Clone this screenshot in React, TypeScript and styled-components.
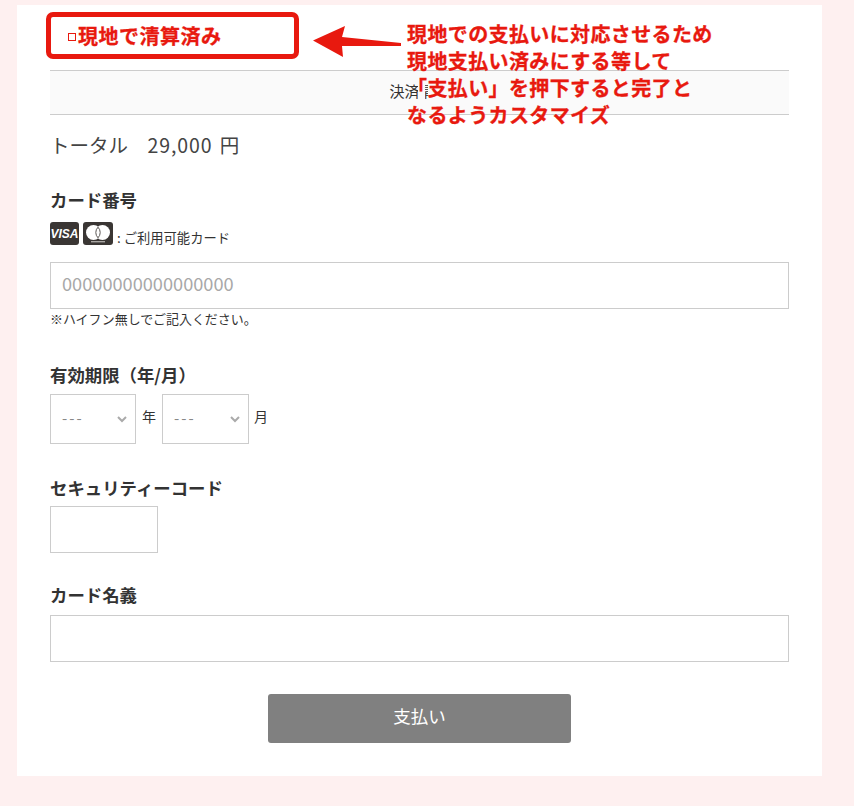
import { createGlobalStyle } from "styled-components"
import styled from "styled-components"

const GlobalStyle = createGlobalStyle`
  html, body {
    margin: 0;
    padding: 0;
    background: #fef0f0;
    font-family: "Noto Sans CJK JP", "Open Sans", sans-serif;
    color: #333;
  }
`

const Page = styled.div`
  width: 854px;
  height: 806px;
  padding: 5px 0 0 17px;
  box-sizing: border-box;
  overflow: hidden;
`

const Card = styled.main`
  position: relative;
  width: 805px;
  height: 771px;
  box-sizing: border-box;
  padding: 65px 33px 0;
  background: #fff;
`

const StepBar = styled.div`
  height: 45px;
  box-sizing: border-box;
  padding-bottom: 4px;
  border-top: 1px solid #ccc;
  border-bottom: 1px solid #ccc;
  background: #fafafa;
  display: flex;
  align-items: center;
  justify-content: center;
  font-size: 15px;
  line-height: 20px;
`

const Total = styled.div`
  margin-top: 15px;
  height: 30px;
  font-size: 19.5px;
  line-height: 30px;
  color: #444;
`

const Amount = styled.span`
  letter-spacing: 0.9px;
  word-spacing: 2px;
`

const Section = styled.section<{ $top: number }>`
  margin-top: ${p => p.$top}px;
`

const Label = styled.div`
  font-size: 17.4px;
  font-weight: 700;
  line-height: 26px;
  color: #333;
`

const CardRow = styled.div`
  display: flex;
  align-items: flex-end;
  gap: 4px;
  margin-top: 8px;
  height: 24px;
  font-size: 13.3px;
  line-height: 17px;
`

const CardNote = styled.span`
  margin-bottom: -1px;
`

const TextInput = styled.input<{ $width?: number; $top: number }>`
  display: block;
  width: ${p => (p.$width ? `${p.$width}px` : "100%")};
  height: 47px;
  margin-top: ${p => p.$top}px;
  box-sizing: border-box;
  padding: 0 11px 6px;
  border: 1px solid #ccc;
  border-radius: 0;
  outline: none;
  background: #fff;
  font-family: inherit;
  font-size: 18.2px;
  color: #333;
  &::placeholder {
    color: #a8a8a8;
    opacity: 1;
  }
`

const Hint = styled.div`
  margin-top: 0;
  font-size: 12.95px;
  line-height: 20px;
  color: #333;
`

const ExpiryRow = styled.div`
  display: flex;
  align-items: center;
  margin-top: 6px;
`

const SelectWrap = styled.div<{ $width: number }>`
  position: relative;
  width: ${p => p.$width}px;
  height: 50px;
`

const Select = styled.select`
  appearance: none;
  width: 100%;
  height: 100%;
  box-sizing: border-box;
  padding: 0 0 4px 11px;
  border: 1px solid #ccc;
  border-radius: 0;
  background: #fff;
  font-family: inherit;
  font-size: 15px;
  letter-spacing: 2px;
  color: #888;
`

const Chevron = styled.svg`
  position: absolute;
  right: 9px;
  top: 21px;
  width: 10px;
  height: 8px;
  pointer-events: none;
`

const Unit = styled.span<{ $width: number }>`
  width: ${p => p.$width}px;
  text-align: center;
  font-size: 14px;
  line-height: 20px;
  margin-top: -7px;
`

const PayRow = styled.div`
  display: flex;
  justify-content: center;
  margin-top: 32px;
`

const PayButton = styled.button`
  width: 303px;
  height: 49px;
  padding: 0 0 6px;
  border: none;
  border-radius: 3px;
  background: #808080;
  color: #fff;
  font-family: inherit;
  font-size: 17.5px;
`

const CalloutBox = styled.div`
  position: absolute;
  left: 29px;
  top: 7px;
  width: 253px;
  height: 47px;
  box-sizing: border-box;
  border: 5px solid #e8190f;
  border-radius: 7px;
  background: #fff;
  display: flex;
  align-items: center;
  padding-left: 17px;
  color: #e8190f;
  font-size: 20px;
  font-weight: 700;
  line-height: 28px;
  letter-spacing: 0.5px;
  -webkit-text-stroke: 0.3px #e8190f;
`

const CalloutCheck = styled.span`
  width: 6px;
  height: 6px;
  margin: 3px 2px 0 0;
  border: 1px solid #e8190f;
`

const Arrow = styled.svg`
  position: absolute;
  left: 296px;
  top: 21px;
  width: 88px;
  height: 32px;
`

const Note = styled.div`
  position: absolute;
  left: 390px;
  top: 15px;
  color: #e8190f;
  font-size: 20px;
  font-weight: 700;
  line-height: 27px;
  letter-spacing: 0.38px;
  -webkit-text-stroke: 0.3px #e8190f;
  white-space: nowrap;
`

const NoteLine = styled.div<{ $masked?: boolean }>`
  height: 27px;
  width: max-content;
  /* the annotation image hides the end of the step title, bar a sliver by the bracket */
  background: ${p =>
    p.$masked
      ? "linear-gradient(to right, transparent 11px, #fafafa 11px, #fafafa 18px, transparent 18px, transparent 21px, #fafafa 21px)"
      : "transparent"};
`

const VisaIcon = () => (
  <svg width="29" height="23" viewBox="0 0 29 23">
    <rect width="29" height="23" rx="3" fill="#3a3634" />
    <text x="14.5" y="16" textAnchor="middle" fill="#fff" fontSize="12" fontWeight="700" fontStyle="italic" fontFamily="'Liberation Sans', sans-serif">VISA</text>
  </svg>
)

const MasterIcon = () => (
  <svg width="30" height="23" viewBox="0 0 30 23">
    <rect width="30" height="23" rx="3" fill="#3a3634" />
    <circle cx="10.5" cy="10.5" r="7.5" fill="#fff" />
    <circle cx="19.5" cy="10.5" r="7.5" fill="#fff" />
    <path d="M15 5.2a7.5 7.5 0 0 1 0 10.6a7.5 7.5 0 0 1 0-10.6z" fill="#fff" stroke="#5b5754" strokeWidth="1" />
    <rect x="8" y="19" width="14" height="1.4" fill="#a9a6a3" />
  </svg>
)

export default function App() {
  return (
    <Page>
      <GlobalStyle />
      <Card>
        <StepBar>決済情報</StepBar>
        <Total>トータル　<Amount>29,000 円</Amount></Total>

        <Section $top={27}>
          <Label>カード番号</Label>
          <CardRow>
            <VisaIcon />
            <MasterIcon />
            <CardNote>: ご利用可能カード</CardNote>
          </CardRow>
          <TextInput $top={17} placeholder="00000000000000000" />
          <Hint>※ハイフン無しでご記入ください。</Hint>
        </Section>

        <Section $top={33}>
          <Label>有効期限（年/月）</Label>
          <ExpiryRow>
            <SelectWrap $width={86}>
              <Select defaultValue="">
                <option value="">---</option>
              </Select>
              <Chevron viewBox="0 0 10 8"><path d="M1 2l4 4 4-4" fill="none" stroke="#aaa" strokeWidth="2" /></Chevron>
            </SelectWrap>
            <Unit $width={26}>年</Unit>
            <SelectWrap $width={87}>
              <Select defaultValue="">
                <option value="">---</option>
              </Select>
              <Chevron viewBox="0 0 10 8"><path d="M1 2l4 4 4-4" fill="none" stroke="#aaa" strokeWidth="2" /></Chevron>
            </SelectWrap>
            <Unit $width={24}>月</Unit>
          </ExpiryRow>
        </Section>

        <Section $top={31}>
          <Label>セキュリティーコード</Label>
          <TextInput $top={5} $width={108} />
        </Section>

        <Section $top={29}>
          <Label>カード名義</Label>
          <TextInput $top={7} />
        </Section>

        <PayRow>
          <PayButton>支払い</PayButton>
        </PayRow>

        <CalloutBox>
          <CalloutCheck />
          現地で清算済み
        </CalloutBox>
        <Arrow viewBox="0 0 88 32">
          <path d="M0 14.5 L32 0 L29 11 L88 17 L88 20 L29 20 L30 31 Z" fill="#e8190f" />
        </Arrow>
        <Note>
          <NoteLine>現地での支払いに対応させるため</NoteLine>
          <NoteLine>現地支払い済みにする等して</NoteLine>
          <NoteLine $masked>「支払い」を押下すると完了と</NoteLine>
          <NoteLine>なるようカスタマイズ</NoteLine>
        </Note>
      </Card>
    </Page>
  )
}
